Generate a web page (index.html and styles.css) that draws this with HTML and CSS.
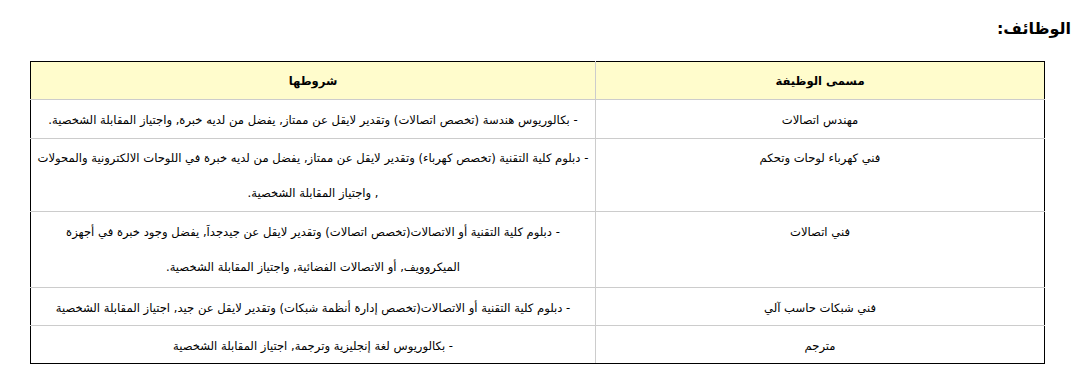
FILE: index.html
```html
<!DOCTYPE html>
<html lang="ar" dir="rtl">
<head>
<meta charset="utf-8">
<title>الوظائف</title>
<link rel="stylesheet" href="styles.css">
</head>
<body>
<div class="page">
  <h2 class="title">الوظائف:</h2>
  <table class="jobs">
    <thead>
      <tr>
        <th class="col-name">مسمى الوظيفة</th>
        <th class="col-req">شروطها</th>
      </tr>
    </thead>
    <tbody>
      <tr class="r1">
        <td>مهندس اتصالات</td>
        <td class="req">- بكالوريوس هندسة (تخصص اتصالات) وتقدير لايقل عن ممتاز, يفضل من لديه خبرة, واجتياز المقابلة الشخصية.</td>
      </tr>
      <tr class="r2">
        <td>فني كهرباء لوحات وتحكم</td>
        <td class="req">- دبلوم كلية التقنية (تخصص كهرباء) وتقدير لايقل عن ممتاز, يفضل من لديه خبرة في اللوحات الالكترونية والمحولات<br>, واجتياز المقابلة الشخصية.</td>
      </tr>
      <tr class="r3">
        <td>فني اتصالات</td>
        <td class="req">- دبلوم كلية التقنية أو الاتصالات(تخصص اتصالات) وتقدير لايقل عن جيدجداَ, يفضل وجود خبرة في أجهزة<br>الميكروويف, أو الاتصالات الفضائية, واجتياز المقابلة الشخصية.</td>
      </tr>
      <tr class="r4">
        <td>فني شبكات حاسب آلي</td>
        <td class="req">- دبلوم كلية التقنية أو الاتصالات(تخصص إدارة أنظمة شبكات) وتقدير لايقل عن جيد, اجتياز المقابلة الشخصية</td>
      </tr>
      <tr class="r5">
        <td>مترجم</td>
        <td class="req">- بكالوريوس لغة إنجليزية وترجمة, اجتياز المقابلة الشخصية</td>
      </tr>
    </tbody>
  </table>
</div>
</body>
</html>
```

FILE: styles.css
```css
html, body {
  margin: 0;
  padding: 0;
  background: #ffffff;
}

body {
  direction: rtl;
  font-family: "DejaVu Sans", "Noto Sans", sans-serif;
  color: #000000;
}

.page {
  padding: 18px 10px 0 0;
}

.title {
  margin: 0;
  font-size: 16px;
  font-weight: bold;
  line-height: 22px;
  height: 43px;
}

.jobs {
  width: 1015px;
  margin-right: 26px;
  border-collapse: collapse;
  font-size: 11.6px;
}

.jobs th,
.jobs td {
  border: 1px solid #cccccc;
  text-align: center;
  vertical-align: top;
  line-height: 35px;
  padding: 3px 2px 0;
}

.jobs .req {
  white-space: nowrap;
}

.jobs th {
  background: #fffccc;
  font-weight: bold;
  border-top-color: #000000;
  padding-top: 2px;
}

.jobs tr > :first-child {
  border-right-color: #000000;
  width: 444px;
}

.jobs tr > :last-child {
  border-left-color: #000000;
}

.jobs tbody tr:last-child td {
  border-bottom-color: #000000;
}

.jobs .r2 td {
  padding-top: 2px;
}

.jobs .r3 td {
  padding-bottom: 2px;
}

.jobs .r4 td,
.jobs .r5 td {
  line-height: 34px;
}
```
